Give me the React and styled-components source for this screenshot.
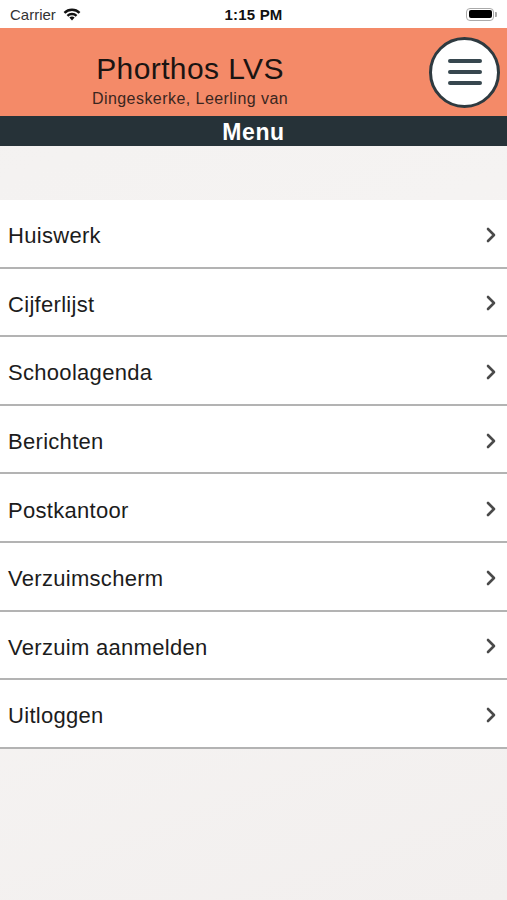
import React from 'react';
import styled, { createGlobalStyle } from 'styled-components';

const GlobalStyle = createGlobalStyle`
    html, body {
        margin: 0;
        padding: 0;
        background: #f4f2f1;
        font-family: "Liberation Sans", Arial, sans-serif;
    }
    * { box-sizing: border-box; }
`;

const Screen = styled.div`
    width: 507px;
    min-height: 900px;
    background: linear-gradient(160deg, #f3f1f0 0%, #f6f4f3 50%, #f2efee 100%);
    display: flex;
    flex-direction: column;
`;

const StatusBar = styled.div`
    height: 28px;
    background: #ffffff;
    display: grid;
    grid-template-columns: 1fr auto 1fr;
    align-items: center;
    padding: 0 10px;
    font-size: 15px;
    color: #111;
`;

const Carrier = styled.div`
    display: flex;
    align-items: center;
    gap: 6px;
    color: #333;
`;

const Time = styled.div`
    font-weight: bold;
    letter-spacing: 0.2px;
`;

const Battery = styled.div`
    justify-self: end;
    display: flex;
    align-items: center;
`;

const BatteryBody = styled.div`
    width: 28px;
    height: 13px;
    border: 1.5px solid #aaa;
    border-radius: 4px;
    padding: 1.5px;
    div {
        width: 100%;
        height: 100%;
        background: #000;
        border-radius: 2px;
    }
`;

const BatteryTip = styled.div`
    width: 2px;
    height: 5px;
    background: #aaa;
    border-radius: 0 1px 1px 0;
    margin-left: 1px;
`;

const Header = styled.header`
    height: 88px;
    background: #f48a68;
    display: flex;
    align-items: center;
`;

const TitleBlock = styled.div`
    width: 380px;
    display: flex;
    flex-direction: column;
    align-items: center;
    padding-top: 16px;
`;

const Title = styled.h1`
    margin: 0;
    font-weight: normal;
    font-size: 30px;
    letter-spacing: 0.4px;
    line-height: 34px;
    color: #1a1412;
`;

const Subtitle = styled.div`
    font-size: 16px;
    letter-spacing: 0.45px;
    line-height: 20px;
    margin-top: 3px;
    color: #3a2620;
`;

const MenuButton = styled.button`
    width: 71px;
    height: 71px;
    margin-left: 49px;
    border-radius: 50%;
    border: 3px solid #2e3a40;
    background: #ffffff;
    display: flex;
    flex-direction: column;
    align-items: center;
    justify-content: center;
    gap: 7.5px;
    padding: 0;
    span {
        display: block;
        width: 34px;
        height: 3.5px;
        border-radius: 2px;
        background: #37474f;
    }
`;

const MenuBar = styled.div`
    height: 30px;
    background: #263238;
    color: #ffffff;
    font-weight: bold;
    font-size: 23px;
    letter-spacing: 0.6px;
    display: flex;
    align-items: center;
    justify-content: center;
    padding-top: 2px;
`;

const Spacer = styled.div`
    height: 54px;
`;

const List = styled.ul`
    list-style: none;
    margin: 0;
    padding: 0;
`;

const Row = styled.li`
    height: 68.6px;
    background: #ffffff;
    border-bottom: 2px solid #b3b3b3;
    display: flex;
    align-items: center;
    justify-content: space-between;
    padding: 6px 10px 0 8px;
    font-size: 22px;
    letter-spacing: 0.3px;
    color: #1c1c1c;
`;

const Chevron = styled.svg`
    width: 12px;
    height: 16px;
    margin-top: -3px;
`;

const items = [
    'Huiswerk',
    'Cijferlijst',
    'Schoolagenda',
    'Berichten',
    'Postkantoor',
    'Verzuimscherm',
    'Verzuim aanmelden',
    'Uitloggen',
];

function App() {
    return (
        <Screen>
            <GlobalStyle />
            <StatusBar>
                <Carrier>
                    Carrier
                    <svg width="20" height="14" viewBox="0 0 20 14">
                        <path d="M10 13.5 L12.6 10.6 A4 4 0 0 0 7.4 10.6 Z" fill="#111" />
                        <path d="M4.6 7.9 A7.8 7.8 0 0 1 15.4 7.9 L13.7 9.7 A5.4 5.4 0 0 0 6.3 9.7 Z" fill="#111" />
                        <path d="M1.6 4.9 A12 12 0 0 1 18.4 4.9 L16.7 6.7 A9.6 9.6 0 0 0 3.3 6.7 Z" fill="#111" />
                    </svg>
                </Carrier>
                <Time>1:15 PM</Time>
                <Battery>
                    <BatteryBody><div /></BatteryBody>
                    <BatteryTip />
                </Battery>
            </StatusBar>
            <Header>
                <TitleBlock>
                    <Title>Phorthos LVS</Title>
                    <Subtitle>Dingeskerke, Leerling van</Subtitle>
                </TitleBlock>
                <MenuButton aria-label="menu">
                    <span />
                    <span />
                    <span />
                </MenuButton>
            </Header>
            <MenuBar>Menu</MenuBar>
            <Spacer />
            <List>
                {items.map((item) => (
                    <Row key={item}>
                        {item}
                        <Chevron viewBox="0 0 12 16">
                            <path d="M3 2 L9 8 L3 14" fill="none" stroke="#4a4a4a" strokeWidth="2.6" strokeLinecap="round" strokeLinejoin="round" />
                        </Chevron>
                    </Row>
                ))}
            </List>
        </Screen>
    );
}

export default App;
